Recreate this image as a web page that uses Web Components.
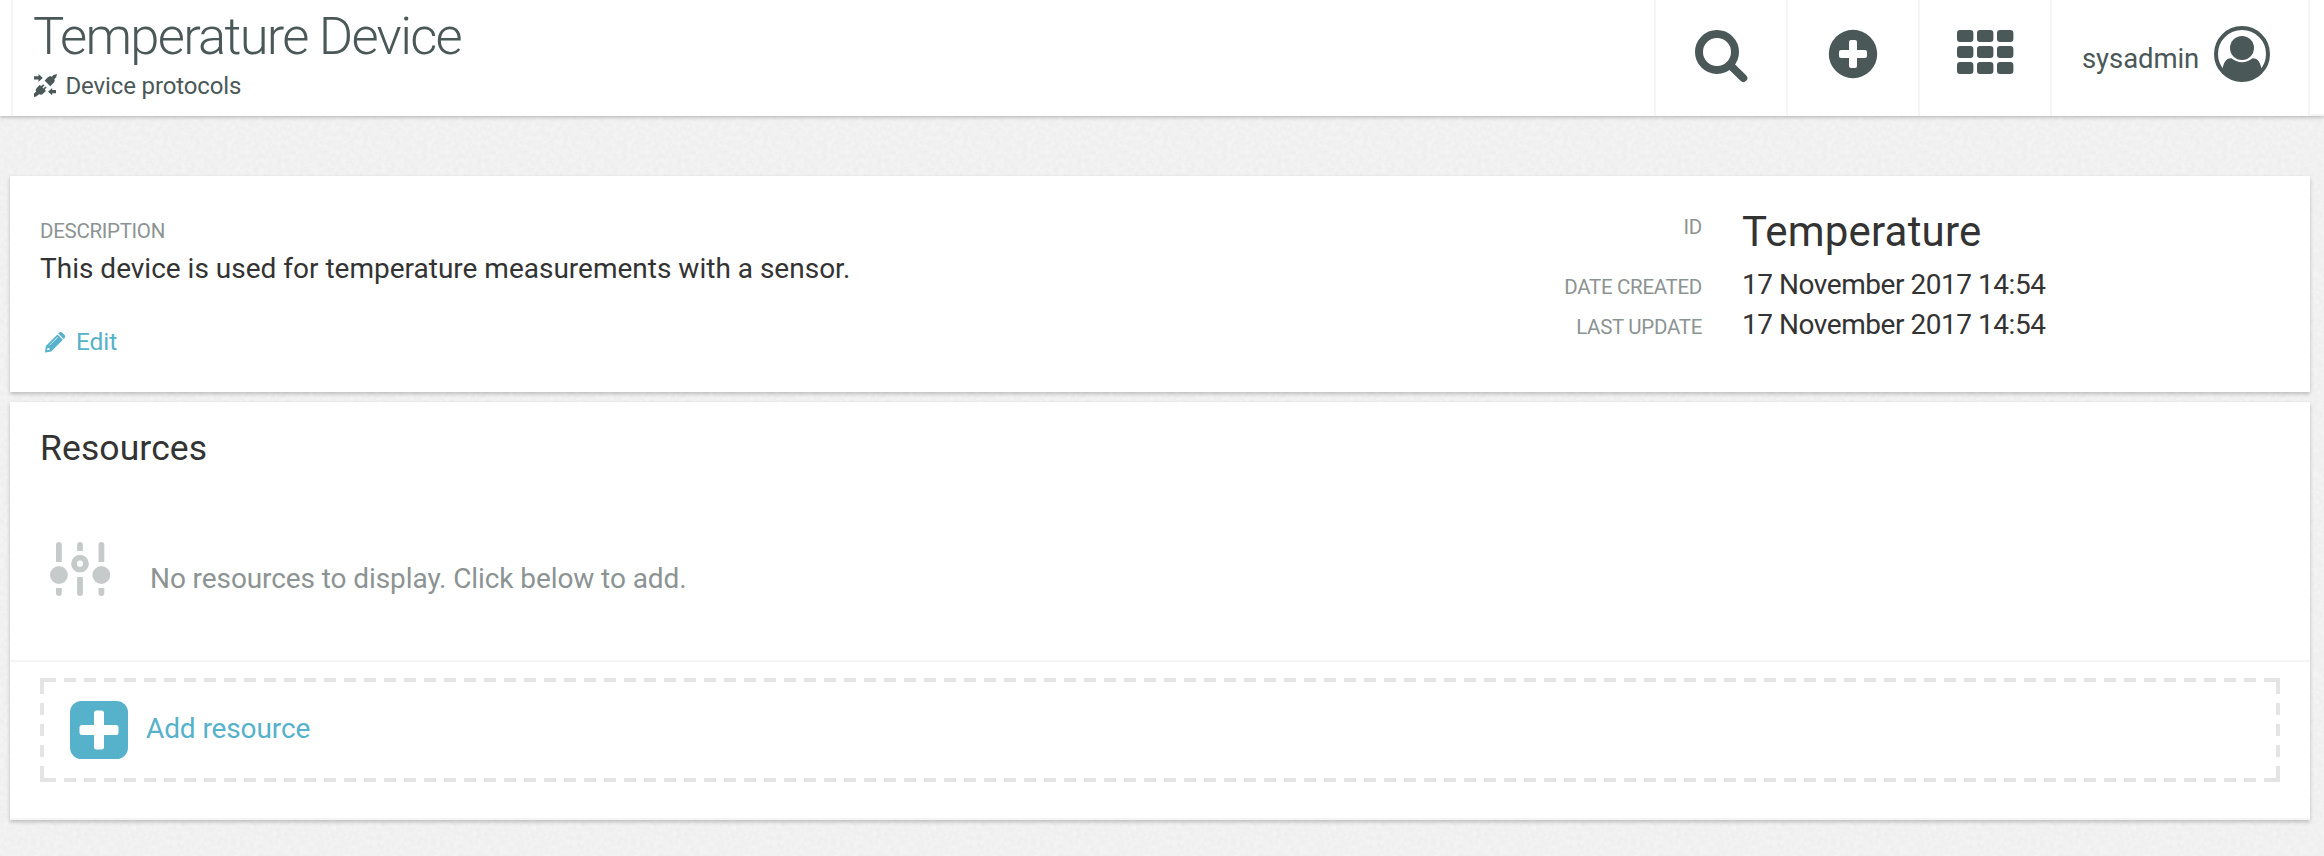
<!DOCTYPE html>
<html lang="en">
<head>
<meta charset="utf-8">
<title>Temperature Device</title>
<style>
html{height:100%}
body{margin:0;min-height:856px;overflow:hidden;font-family:Roboto,"Liberation Sans",sans-serif;font-size:28px;color:#333;background-color:#f4f4f4;
background-image:url("data:image/svg+xml,%3Csvg xmlns='http://www.w3.org/2000/svg' width='200' height='200'%3E%3Cfilter id='n' x='0' y='0' width='1' height='1' color-interpolation-filters='sRGB'%3E%3CfeTurbulence type='fractalNoise' baseFrequency='.22' numOctaves='2' stitchTiles='stitch'/%3E%3CfeColorMatrix values='0 0 0 0 .5 0 0 0 0 .5 0 0 0 0 .5 .09 0 0 0 -.019'/%3E%3C/filter%3E%3Crect width='200' height='200' filter='url(%23n)'/%3E%3C/svg%3E")}
</style>
</head>
<body>
<device-page></device-page>
<script>
const define = (name, html) => {
  const template = document.createElement('template');
  template.innerHTML = html;
  customElements.define(name, class extends HTMLElement {
    constructor() {
      super();
      this.attachShadow({ mode: 'open' }).append(template.content.cloneNode(true));
    }
  });
};

define('icon-search', `<style>:host{display:block}svg{display:block}</style>
<svg width="130" height="116" viewBox="1656 0 130 116" fill="none" stroke="#4b5858"><circle cx="1717" cy="52" r="18" stroke-width="8"/><path d="M1730 65L1743.3 78" stroke-width="8" stroke-linecap="round"/></svg>`);

define('icon-plus-circle', `<style>:host{display:block}svg{display:block}</style>
<svg width="130" height="116" viewBox="1788 0 130 116"><circle cx="1853" cy="54" r="24.2" fill="#4b5858"/><g fill="#fff"><rect x="1839" y="50" width="28" height="8" rx="2"/><rect x="1849" y="40" width="8" height="28" rx="2"/></g></svg>`);

define('icon-apps', `<style>:host{display:block}svg{display:block}</style>
<svg width="130" height="116" viewBox="1920 0 130 116"><defs><g id="r"><rect x="1957" width="16.4" height="12" rx="3"/><rect x="1977" width="16.4" height="12" rx="3"/><rect x="1997" width="16.4" height="12" rx="3"/></g></defs><g fill="#4b5858"><use href="#r" y="30"/><use href="#r" y="46"/><use href="#r" y="62"/></g></svg>`);

define('icon-user', `<style>:host{display:block}svg{display:block}</style>
<svg width="56" height="56" viewBox="0 0 56 56" fill="#4b5858"><circle cx="28" cy="28" r="26" fill="none" stroke="#4b5858" stroke-width="4"/><circle cx="28" cy="22" r="12"/><path d="M8.5 43C9.5 37 12 32 17.5 32.2C20 34.5 24 36.2 28 36.2S36 34.5 38.500 32.200C44 32 46.500 37 47.500 43C43 50 36 54 28 54S13 50 8.500 43Z"/></svg>`);

define('icon-protocols', `<style>:host{display:block}svg{display:block}</style>
<svg width="24" height="24" viewBox="0 0 24 24" fill="#4b5858"><path d="M0 2.200H4.500V0L8.800 4L4.500 7.800V5.500H0Z"/><path d="M22 16H18.200V14L14 17.700L18.200 21.200V19.200H22Z"/><path d="M23 0L19.600 1L17.800 2.700C15.800 1.600 14.800 2.400 13.600 3.600L10.600 6.600L16.200 12.200L19.200 9.200C20.500 8 21.200 6.800 20.400 5L22.200 3.200Z"/><path d="M0 23V19.600L2.200 17.500C1.200 15.800 1.900 14.700 3.200 13.400L5.800 10.800L7.200 12.200L9.200 10.200L10.400 11.400L8.500 13.500L9.400 14.400L11.400 12.400L12.600 13.600L10.700 15.600L11.900 16.900L9.200 19.400C8 20.700 6.800 21 5 20.200L2.200 22.400Z"/></svg>`);

define('icon-pencil', `<style>:host{display:block}svg{display:block}</style>
<svg width="21" height="21" viewBox="0 0 21 21" fill="#56b1cb"><path d="M13.200 1.600L14 .8C15.100-.2 16.400-.1 17.300.8L19.500 3C20.400 4 20.400 5.200 19.500 6.200L18.700 7Z"/><path fill-rule="evenodd" d="M12.500 2.400L17.900 7.800L6.200 19.400L0 20.400L.8 14ZM12.400 5.100L4.300 13.200L4.700 13.600L12.800 5.500ZM2.500 15.800L2 18.300L4.800 17.800L4.400 16.200Z"/></svg>`);

define('icon-sliders', `<style>:host{display:block}svg{display:block}</style>
<svg width="60" height="54" viewBox="50 542 60 54" fill="#c6cacb"><path d="M56 562V545a2.900 2.900 0 0 1 5.800 0V562ZM56 588H61.800V593.100a2.900 2.900 0 0 1-5.800 0ZM98.500 562V545a2.900 2.900 0 0 1 5.800 0V562ZM98.500 588H104.300V593.100a2.900 2.900 0 0 1-5.800 0ZM77.100 551V545a2.900 2.900 0 0 1 5.800 0V551ZM77.100 577H82.900V593.100a2.900 2.900 0 0 1-5.800 0Z"/><circle cx="58.900" cy="575" r="8.900"/><circle cx="101.300" cy="575" r="8.900"/><circle cx="80" cy="563.700" r="6" fill="none" stroke="#c6cacb" stroke-width="5.800"/></svg>`);

define('icon-plus-square', `<style>:host{display:block}svg{display:block}</style>
<svg width="58" height="58" viewBox="0 0 58 58"><rect width="58" height="58" rx="11.500" fill="#56b1cb"/><g fill="#fff"><rect x="9.500" y="24" width="39" height="10" rx="2.500"/><rect x="24" y="9.500" width="10" height="39" rx="2.500"/></g></svg>`);

define('top-bar', `<style>
:host{display:grid;grid-template-columns:11px 1643px 132px 132px 132px 258px 1fr;height:116px;background:#fff;color:#4b5858;box-shadow:0 1px 4px rgba(0,0,0,.28);position:relative}
.c{border-left:2px solid #f5f5f5;box-sizing:border-box}
.t{padding-left:20px}
h1{margin:0;font-weight:300;font-size:52.500px;line-height:72px;letter-spacing:-1.720px;white-space:nowrap}
.s{display:flex;align-items:center;font-size:24px;line-height:28px;gap:7.500px;margin:0 0 0 1px;letter-spacing:-.130px}
.u{display:flex;padding:26px 0 0 30px;gap:17px;font-size:27.500px;letter-spacing:-.080px;white-space:nowrap}
.u span{width:115px;line-height:65px;height:65px}
.e{border-bottom:2px solid #f5f5f5}
</style>
<div></div>
<div class="c t"><h1><slot name="title"></slot></h1><div class="s"><icon-protocols></icon-protocols><slot name="sub"></slot></div></div>
<div class="c"><icon-search></icon-search></div>
<div class="c"><icon-plus-circle></icon-plus-circle></div>
<div class="c"><icon-apps></icon-apps></div>
<div class="c u"><span><slot name="user"></slot></span><icon-user></icon-user></div>
<div class="c e"></div>`);

define('x-card', `<style>:host{display:block;background:#fff;box-shadow:0 2px 4px rgba(0,0,0,.22);box-sizing:border-box}</style><slot></slot>`);

define('device-summary', `<style>
:host{display:grid;grid-template-columns:1485px 207px 1fr;height:216px}
.d{padding:43px 0 0 30px}
.l{font-size:20.500px;color:#8c9393;letter-spacing:-.300px;line-height:24px}
.d .l{margin-bottom:8px}
.x{line-height:36px;white-space:nowrap}
.e{display:flex;align-items:center;gap:10px;color:#56b1cb;font-size:24.500px;line-height:30px;margin:40px 0 0 5px;letter-spacing:-.1px}
.r{text-align:right;padding-top:39px}
.r .l{line-height:40px;height:40px}
.r .l:first-child{line-height:24px;height:52px}
.v{padding:34px 0 0 40px;letter-spacing:-.460px}
.v div{line-height:40px}
.v .b{font-size:42px;line-height:44px;height:55px;letter-spacing:.2px}
</style>
<div class="d"><div class="l">DESCRIPTION</div><div class="x">This device is used for temperature measurements with a sensor.</div><div class="e"><icon-pencil></icon-pencil><span>Edit</span></div></div>
<div class="r"><div class="l">ID</div><div class="l">DATE CREATED</div><div class="l">LAST UPDATE</div></div>
<div class="v"><div class="b">Temperature</div><div>17 November 2017 14:54</div><div>17 November 2017 14:54</div></div>`);

define('add-box', `<style>
:host{display:flex;box-sizing:border-box;width:2240px;height:104px;margin:16px 30px 0;padding:23px 30px;gap:18px;color:#56b1cb;line-height:55px;letter-spacing:-.1px;
--h:repeating-linear-gradient(90deg,#e4e4e4 0 12px,transparent 12px 20px);
--v:repeating-linear-gradient(180deg,#e4e4e4 0 12px,transparent 12px 21px);
--k:linear-gradient(#e4e4e4,#e4e4e4);
background:
var(--k) 0 0/16px 4px no-repeat,var(--k) 100% 0/16px 4px no-repeat,var(--k) 0 100%/16px 4px no-repeat,var(--k) 100% 100%/16px 4px no-repeat,
var(--k) 0 0/4px 16px no-repeat,var(--k) 100% 0/4px 16px no-repeat,var(--k) 0 100%/4px 16px no-repeat,var(--k) 100% 100%/4px 16px no-repeat,
var(--h) 24px 0/2200px 4px no-repeat,var(--h) 24px 100%/2200px 4px no-repeat,
var(--v) 0 25px/4px 60px no-repeat,var(--v) 100% 25px/4px 60px no-repeat}
</style><icon-plus-square></icon-plus-square><slot></slot>`);

define('resource-list', `<style>
:host{display:block;height:418px;box-sizing:border-box;border-bottom:2px solid #f5f5f5}
h2{margin:0;font-weight:400;font-size:35.500px;line-height:48px;padding:22px 0 0 30px;letter-spacing:.1px}
.n{display:flex;padding:70px 0 0 40px;gap:40px;color:#8c9393;height:118px;line-height:73px;letter-spacing:-.090px}
.n span{white-space:nowrap}
hr{border:0;height:2px;margin:0;background:#f5f5f5}
</style><h2>Resources</h2><div class="n"><icon-sliders></icon-sliders><span>No resources to display. Click below to add.</span></div><hr><add-box>Add resource</add-box>`);

define('device-page', `<style>
:host{display:block}
main{display:grid;gap:10px;margin:60px 14px 0 10px}
</style>
<top-bar><span slot="title">Temperature Device</span><span slot="sub">Device protocols</span><span slot="user">sysadmin</span></top-bar>
<main><x-card><device-summary></device-summary></x-card><x-card><resource-list></resource-list></x-card></main>`);
</script>
</body>
</html>
